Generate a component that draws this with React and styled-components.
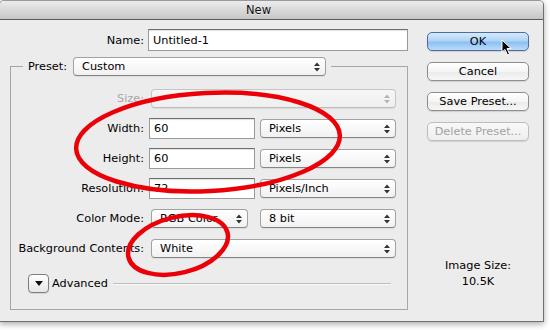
import styled, { createGlobalStyle } from "styled-components";

const Global = createGlobalStyle`
  html, body {
    margin: 0;
    padding: 0;
    background: #ffffff;
    overflow: hidden;
  }
  body {
    font-family: "DejaVu Sans", "Noto Sans", sans-serif;
    font-size: 11.3px;
    color: #000;
  }
`;

const SStage = styled.div`
  position: relative;
  width: 550px;
  height: 330px;
`;

const SWindow = styled.div`
  box-sizing: border-box;
  margin-left: -1px;
  width: 545px;
  height: 322px;
  display: flex;
  flex-direction: column;
  background: #ececec;
  border: 1px solid #6f6f6f;
  border-top-color: #9a9a9a;
  border-radius: 5px 5px 0 0;
  box-shadow: 0 2px 6px rgba(0, 0, 0, 0.35);
  overflow: hidden;
`;

const STitleBar = styled.div`
  height: 18px;
  flex: none;
  display: flex;
  align-items: center;
  justify-content: center;
  padding-right: 26px;
  background: linear-gradient(#ececec, #d9d9d9 50%, #c6c6c6);
  border-bottom: 1px solid #5a5a5a;
  color: #111;
  font-size: 11.5px;
  text-shadow: 0 1px 0 rgba(255, 255, 255, 0.6);
`;

const SBody = styled.div`
  flex: 1;
  display: flex;
  gap: 19px;
  padding: 9px 13px 0 10px;
`;

const SLeftPane = styled.div`
  width: 398px;
  flex: none;
  display: flex;
  flex-direction: column;
`;

const SNameRow = styled.div`
  display: grid;
  grid-template-columns: 138px 260px;
  align-items: center;
  height: 22px;
`;

const SLabel = styled.div`
  text-align: right;
  padding-right: ${(p) => p.$pad || 5}px;
  white-space: nowrap;
  color: ${(p) => (p.$disabled ? "#a8a8a8" : "#000")};
`;

const STextBox = styled.div`
  box-sizing: border-box;
  width: ${(p) => p.$w}px;
  height: ${(p) => p.$h || 21}px;
  display: flex;
  align-items: center;
  padding-left: 4px;
  background: #fff;
  border: 1px solid #9a9a9a;
  border-top-color: #6e6e6e;
  box-shadow: inset 0 1px 1px rgba(0, 0, 0, 0.12);
`;

const SGroup = styled.fieldset`
  margin: 6px 0 0 0;
  padding: 12px 0 16px 0;
  min-width: 0;
  border: 1px solid #a6a6a6;
  border-radius: 0;
`;

const SLegend = styled.legend`
  margin-left: 12px;
  padding: 0 5px;
  display: flex;
  align-items: center;
  gap: 6px;
`;

const SFormGrid = styled.div`
  display: grid;
  grid-template-columns: 138px 111px 136px;
  grid-auto-rows: 21px;
  row-gap: 9px;
  align-items: center;
`;

const SPopup = styled.div`
  box-sizing: border-box;
  width: ${(p) => (p.$w ? `${p.$w}px` : "auto")};
  height: 19px;
  margin-left: ${(p) => p.$ml || 0}px;
  grid-column: ${(p) => p.$span || "auto"};
  display: flex;
  align-items: center;
  justify-content: space-between;
  padding: 0 5px 0 8px;
  border: 1px solid ${(p) => (p.$disabled ? "#c6c6c6" : "#a2a2a2")};
  border-bottom-color: ${(p) => (p.$disabled ? "#bcbcbc" : "#858585")};
  border-radius: 4px;
  background: ${(p) =>
    p.$disabled ? "linear-gradient(#f6f6f6, #efefef)" : "linear-gradient(#ffffff, #f1f1f1)"};
  box-shadow: 0 1px 1px rgba(0, 0, 0, 0.07);
  color: ${(p) => (p.$disabled ? "#a8a8a8" : "#000")};
  white-space: nowrap;
`;

const SAdvancedRow = styled.div`
  display: flex;
  align-items: center;
  margin-top: 15px;
  padding: 0 16px 0 17px;
  height: 19px;
`;

const SDisclosure = styled.div`
  box-sizing: border-box;
  width: 21px;
  height: 19px;
  flex: none;
  display: flex;
  align-items: center;
  justify-content: center;
  border: 1px solid #7d7d7d;
  border-radius: 4px;
  background: linear-gradient(#ffffff, #e6e6e6);
  box-shadow: 0 1px 1px rgba(0, 0, 0, 0.1);
`;

const SAdvancedText = styled.span`
  margin: 0 5px 0 3px;
`;

const SRule = styled.div`
  flex: 1;
  height: 1px;
  background: #bdbdbd;
  box-shadow: 0 1px 0 #fafafa;
`;

const SRightPane = styled.div`
  width: 102px;
  flex: none;
  display: flex;
  flex-direction: column;
  padding-top: 3px;
`;

const SButton = styled.div`
  box-sizing: border-box;
  height: 19px;
  margin-bottom: 11px;
  display: flex;
  align-items: center;
  justify-content: center;
  border: 1px solid ${(p) => (p.$primary ? "#4a6c9e" : p.$disabled ? "#bdbdbd" : "#8d8d8d")};
  border-radius: 5px;
  background: ${(p) =>
    p.$primary
      ? "linear-gradient(#d6e9fc 0%, #b0d4f7 45%, #8cc0f3 55%, #bcdcfb 100%)"
      : p.$disabled
      ? "linear-gradient(#f8f8f8, #efefef)"
      : "linear-gradient(#ffffff 0%, #f5f5f5 50%, #ebebeb 55%, #f7f7f7 100%)"};
  box-shadow: 0 1px 1px rgba(0, 0, 0, 0.12);
  color: ${(p) => (p.$disabled ? "#a2a2a2" : "#000")};
`;

const SImageSize = styled.div`
  margin-top: 106px;
  text-align: center;
  line-height: 16px;
  display: flex;
  flex-direction: column;
`;

const SOverlay = styled.svg`
  position: absolute;
  left: 0;
  top: 0;
  pointer-events: none;
`;

const Arrows = ({ disabled }) => (
  <svg width="6" height="10" viewBox="0 0 6 10">
    <path d="M0 4 L3 0.5 L6 4 Z M0 6 L3 9.5 L6 6 Z" fill={disabled ? "#b5b5b5" : "#333"} />
  </svg>
);

const Popup = ({ children, ...rest }) => (
  <SPopup {...rest}>
    <span>{children}</span>
    <Arrows disabled={rest.$disabled} />
  </SPopup>
);

const App = () => (
  <>
    <Global />
    <SStage>
      <SWindow>
        <STitleBar>New</STitleBar>
        <SBody>
          <SLeftPane>
            <SNameRow>
              <SLabel $pad={4}>Name:</SLabel>
              <STextBox $w={260} $h={22}>Untitled-1</STextBox>
            </SNameRow>
            <SGroup>
              <SLegend>
                <span>Preset:</span>
                <Popup $w={253}>Custom</Popup>
              </SLegend>
              <SFormGrid>
                <SLabel $disabled>Size:</SLabel>
                <Popup $disabled $span="2 / 4" $ml={2}></Popup>

                <SLabel>Width:</SLabel>
                <STextBox $w={106}>60</STextBox>
                <Popup>Pixels</Popup>

                <SLabel>Height:</SLabel>
                <STextBox $w={106}>60</STextBox>
                <Popup>Pixels</Popup>

                <SLabel>Resolution:</SLabel>
                <STextBox $w={106}>72</STextBox>
                <Popup>Pixels/Inch</Popup>

                <SLabel>Color Mode:</SLabel>
                <Popup $w={97} $ml={2}>RGB Color</Popup>
                <Popup>8 bit</Popup>

                <SLabel>Background Contents:</SLabel>
                <Popup $span="2 / 4" $ml={2}>White</Popup>
              </SFormGrid>
              <SAdvancedRow>
                <SDisclosure>
                  <svg width="8" height="5" viewBox="0 0 8 5">
                    <path d="M0 0 L8 0 L4 5 Z" fill="#111" />
                  </svg>
                </SDisclosure>
                <SAdvancedText>Advanced</SAdvancedText>
                <SRule />
              </SAdvancedRow>
            </SGroup>
          </SLeftPane>
          <SRightPane>
            <SButton $primary>OK</SButton>
            <SButton>Cancel</SButton>
            <SButton>Save Preset...</SButton>
            <SButton $disabled>Delete Preset...</SButton>
            <SImageSize>
              <span>Image Size:</span>
              <span>10.5K</span>
            </SImageSize>
          </SRightPane>
        </SBody>
      </SWindow>
      <SOverlay width="550" height="330" viewBox="0 0 550 330">
        <ellipse
          cx="208"
          cy="142"
          rx="132"
          ry="49"
          transform="rotate(-3 208 142)"
          fill="none"
          stroke="#ec0008"
          strokeWidth="4.5"
        />
        <ellipse
          cx="178"
          cy="245"
          rx="51"
          ry="28"
          transform="rotate(-14 178 245)"
          fill="none"
          stroke="#ec0008"
          strokeWidth="4.5"
        />
        <path
          d="M502 40 L502 52 L505 49.5 L507.5 55 L509.5 54 L507 48.5 L511 48.5 Z"
          fill="#000"
          stroke="#fff"
          strokeWidth="1"
          strokeLinejoin="round"
        />
      </SOverlay>
    </SStage>
  </>
);

export default App;
